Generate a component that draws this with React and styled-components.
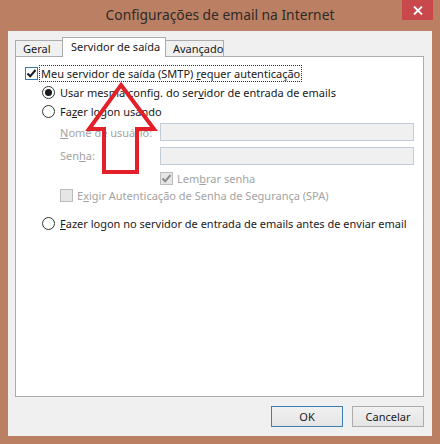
import React from 'react';
import styled, { createGlobalStyle } from 'styled-components';

const Global = createGlobalStyle`
  html, body { margin: 0; padding: 0; background: #bb8063; }
  body { font-family: "Noto Sans", "Open Sans", sans-serif; }
`;

const Window = styled.div`
  position: relative;
  width: 440px;
  height: 444px;
  box-sizing: border-box;
  background: #bb8063;
  display: flex;
  flex-direction: column;
  padding: 0 8px 8px 8px;
`;

const TitleBar = styled.div`
  height: 31px;
  flex-shrink: 0;
  position: relative;
  display: flex;
  align-items: center;
  justify-content: center;
  font-size: 13.8px;
  color: #2e2a28;
  padding-bottom: 3px;
  box-sizing: border-box;
`;

const CloseBtn = styled.div`
  position: absolute;
  top: 0;
  right: -1px;
  width: 31px;
  height: 20px;
  background: #c9484b;
  display: flex;
  align-items: center;
  justify-content: center;
`;

const Client = styled.div`
  flex: 1;
  background: #f0f0f0;
  display: flex;
  flex-direction: column;
  padding: 7px 8px 9px 7px;
  font-size: 11px;
  color: #1a1a1a;
`;

const TabStrip = styled.div`
  display: flex;
  align-items: flex-end;
  height: 19px;
  margin-bottom: -1px;
  position: relative;
  z-index: 1;
`;

const Tab = styled.div`
  box-sizing: border-box;
  width: ${p => p.$w}px;
  height: ${p => (p.$active ? 20 : 17)}px;
  padding-left: ${p => (p.$active ? 8 : 7)}px;
  padding-top: ${p => (p.$active ? 1 : 0)}px;
  border: 1px solid #acacac;
  border-bottom: ${p => (p.$active ? 'none' : '1px solid #acacac')};
  background: ${p => (p.$active ? '#ffffff' : '#f0f0f0')};
  margin-left: ${p => p.$ml || 0}px;
  line-height: 16px;
  white-space: nowrap;
  color: #1a1a1a;
`;

const Panel = styled.div`
  height: 341px;
  box-sizing: border-box;
  background: #fff;
  border: 1px solid #acacac;
  padding: 7px 9px 0 9px;
  display: flex;
  flex-direction: column;
`;

const Row = styled.div`
  display: flex;
  align-items: center;
  height: ${p => p.$h || 19}px;
  margin-left: ${p => p.$indent || 0}px;
  margin-top: ${p => p.$mt || 0}px;
  color: ${p => (p.$disabled ? '#a3a3a3' : '#1a1a1a')};
  white-space: nowrap;
`;

const Label = styled.span`
  padding: 0 1px;
  line-height: 15px;
  border: 1px ${p => (p.$focus ? 'dotted #333' : 'solid transparent')};
  margin-left: ${p => p.$ml || 3}px;
`;

const Box = styled.div`
  width: 13px;
  height: 13px;
  box-sizing: border-box;
  border: 1px solid ${p => (p.$disabled ? '#bcbcbc' : '#3a79ad')};
  background: ${p => (p.$disabled ? '#e6e6e6' : '#fff')};
  display: flex;
  align-items: center;
  justify-content: center;
  flex-shrink: 0;
`;

const Radio = styled.div`
  width: 13px;
  height: 13px;
  box-sizing: border-box;
  border-radius: 50%;
  border: 1px solid #333;
  background: #fff;
  display: flex;
  align-items: center;
  justify-content: center;
  flex-shrink: 0;
  &::after {
    content: '';
    display: ${p => (p.$checked ? 'block' : 'none')};
    width: 7px;
    height: 7px;
    border-radius: 50%;
    background: #1a1a1a;
  }
`;

const FieldLabel = styled.span`
  width: 100px;
  color: #a3a3a3;
`;

const Input = styled.div`
  width: 255px;
  height: 18px;
  box-sizing: border-box;
  border: 1px solid #c3cbd6;
  background: #f0f0f0;
`;

const U = styled.span`
  text-decoration: underline;
`;

const ButtonRow = styled.div`
  display: flex;
  justify-content: flex-end;
  gap: 9px;
  margin-top: 9px;
`;

const Button = styled.div`
  width: 72px;
  height: 21px;
  box-sizing: border-box;
  border: 1px solid ${p => (p.$default ? '#3c7fb1' : '#acacac')};
  background: linear-gradient(#f0f0f0, #e5e5e5);
  display: flex;
  align-items: center;
  justify-content: center;
  color: #1a1a1a;
`;

const Overlay = styled.svg`
  position: absolute;
  left: 0;
  top: 0;
  pointer-events: none;
`;

function Check({ disabled }) {
  return (
    <svg width="11" height="11" viewBox="0 0 11 11">
      <path d="M1.5 5.5 L4.2 8.3 L9.5 2" fill="none" stroke={disabled ? '#8c8c8c' : '#1a1a1a'} strokeWidth="2" />
    </svg>
  );
}

function App() {
  return (
    <Window>
      <Global />
      <TitleBar>
        Configurações de email na Internet
        <CloseBtn>
          <svg width="10" height="9" viewBox="0 0 10 9">
            <path d="M1 0.5 L9 8.5 M9 0.5 L1 8.5" stroke="#fff" strokeWidth="1.8" />
          </svg>
        </CloseBtn>
      </TitleBar>
      <Client>
        <TabStrip>
          <Tab $w={48}>Geral</Tab>
          <Tab $w={104} $active $ml={-1}>Servidor de saída</Tab>
          <Tab $w={59} $ml={-1}>Avançado</Tab>
        </TabStrip>
        <Panel>
          <Row>
            <Box><Check /></Box>
            <Label $focus $ml={1}>Meu servidor de saída (SMTP) <U>r</U>equer autenticação</Label>
          </Row>
          <Row $indent={17}>
            <Radio $checked />
            <Label>Usar mesma config. do ser<U>v</U>idor de entrada de emails</Label>
          </Row>
          <Row $indent={17}>
            <Radio />
            <Label>Fa<U>z</U>er logon usando</Label>
          </Row>
          <Row $indent={35} $h={22} $disabled>
            <FieldLabel><U>N</U>ome de usuário:</FieldLabel>
            <Input />
          </Row>
          <Row $indent={35} $h={23} $mt={1} $disabled>
            <FieldLabel>Sen<U>h</U>a:</FieldLabel>
            <Input />
          </Row>
          <Row $indent={135} $h={17} $mt={3} $disabled>
            <Box $disabled><Check disabled /></Box>
            <Label $ml={2}>Lem<U>b</U>rar senha</Label>
          </Row>
          <Row $indent={35} $h={17} $disabled>
            <Box $disabled />
            <Label $ml={2}>E<U>x</U>igir Autenticação de Senha de Segurança (SPA)</Label>
          </Row>
          <Row $indent={17} $mt={10}>
            <Radio />
            <Label><U>F</U>azer logon no servidor de entrada de emails antes de enviar email</Label>
          </Row>
        </Panel>
        <ButtonRow>
          <Button $default>OK</Button>
          <Button>Cancelar</Button>
        </ButtonRow>
      </Client>
      <Overlay width="440" height="444" viewBox="0 0 440 444">
        <polygon
          points="121,85 154,129 137,129 137,172 104,172 104,129 89,129"
          fill="none"
          stroke="#e3202a"
          strokeWidth="4"
          strokeLinejoin="miter"
        />
      </Overlay>
    </Window>
  );
}

export default App;
